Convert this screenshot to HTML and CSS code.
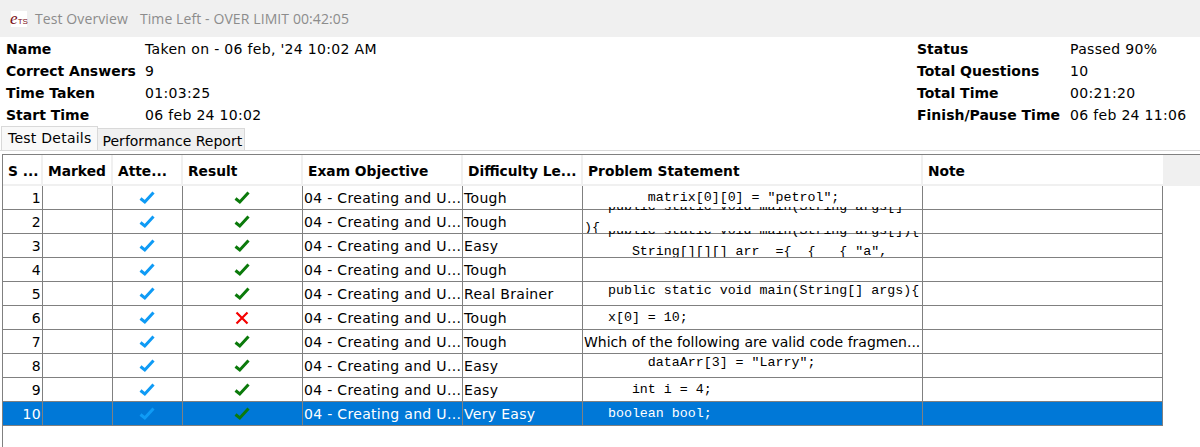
FILE: index.html
```html
<!DOCTYPE html>
<html lang="en">
<head>
  <meta charset="UTF-8">
  <meta name="viewport" content="width=device-width, initial-scale=1.0">
  <title>Test Overview</title>
  <link rel="stylesheet" href="styles.css">
</head>
<body>

<svg class="icon-defs" width="0" height="0">
  <symbol id="check" viewBox="0 0 16 14"><path d="M1.5 7.5 L5.8 11 L14.5 1.5" fill="none" stroke="currentColor" stroke-width="3"/></symbol>
  <symbol id="cross" viewBox="0 0 16 14"><path d="M2.5 1.5 L13.5 12.5 M13.5 1.5 L2.5 12.5" fill="none" stroke="currentColor" stroke-width="2.2"/></symbol>
</svg>

<div class="window">
  <div class="title-bar">
    <span class="app-icon"><span class="app-icon-e">e</span><span class="app-icon-ts">TS</span></span>
    <span class="title-text">Test Overview</span>
    <span class="title-text">Time Left - OVER LIMIT 00:42:05</span>
  </div>

  <!-- Summary of the test -->
  <div class="summary">
    <div class="summary-col">
      <div class="summary-label">Name</div><div>Taken on - 06 feb, '24 10:02 AM</div>
      <div class="summary-label">Correct Answers</div><div>9</div>
      <div class="summary-label">Time Taken</div><div>01:03:25</div>
      <div class="summary-label">Start Time</div><div>06 feb 24 10:02</div>
    </div>
    <div class="summary-col summary-col-right">
      <div class="summary-label">Status</div><div>Passed 90%</div>
      <div class="summary-label">Total Questions</div><div>10</div>
      <div class="summary-label">Total Time</div><div>00:21:20</div>
      <div class="summary-label">Finish/Pause Time</div><div>06 feb 24 11:06</div>
    </div>
  </div>

  <div class="tabs">
    <div class="tab tab-active">Test Details</div>
    <div class="tab">Performance Report</div>
  </div>

  <div class="table-wrap">
    <table class="results">
      <colgroup>
        <col class="col-num"><col class="col-marked"><col class="col-att"><col class="col-result">
        <col class="col-obj"><col class="col-diff"><col class="col-problem"><col class="col-note">
      </colgroup>
      <thead>
        <tr>
          <th>S ...</th><th>Marked</th><th>Atte...</th><th>Result</th>
          <th>Exam Objective</th><th>Difficulty Le...</th><th>Problem Statement</th><th>Note</th>
        </tr>
      </thead>
      <tbody>
        <tr>
          <td class="num">1</td><td></td>
          <td class="icon-cell"><svg class="mark attempted"><use href="#check"/></svg></td>
          <td class="icon-cell"><svg class="mark correct"><use href="#check"/></svg></td>
          <td>04 - Creating and U...</td><td>Tough</td>
          <td><div class="code"><pre>        matrix[0][0] = "petrol";</pre></div></td><td></td>
        </tr>
        <tr>
          <td class="num">2</td><td></td>
          <td class="icon-cell"><svg class="mark attempted"><use href="#check"/></svg></td>
          <td class="icon-cell"><svg class="mark correct"><use href="#check"/></svg></td>
          <td>04 - Creating and U...</td><td>Tough</td>
          <td><div class="code code-multi"><pre>   public static void main(String args[]
){</pre></div></td><td></td>
        </tr>
        <tr>
          <td class="num">3</td><td></td>
          <td class="icon-cell"><svg class="mark attempted"><use href="#check"/></svg></td>
          <td class="icon-cell"><svg class="mark correct"><use href="#check"/></svg></td>
          <td>04 - Creating and U...</td><td>Easy</td>
          <td><div class="code code-multi"><pre>   public static void main(String args[]){
      String[][][] arr  ={  {   { "a",</pre></div></td><td></td>
        </tr>
        <tr>
          <td class="num">4</td><td></td>
          <td class="icon-cell"><svg class="mark attempted"><use href="#check"/></svg></td>
          <td class="icon-cell"><svg class="mark correct"><use href="#check"/></svg></td>
          <td>04 - Creating and U...</td><td>Tough</td>
          <td></td><td></td>
        </tr>
        <tr>
          <td class="num">5</td><td></td>
          <td class="icon-cell"><svg class="mark attempted"><use href="#check"/></svg></td>
          <td class="icon-cell"><svg class="mark correct"><use href="#check"/></svg></td>
          <td>04 - Creating and U...</td><td>Real Brainer</td>
          <td><div class="code code-high"><pre>   public static void main(String[] args){</pre></div></td><td></td>
        </tr>
        <tr>
          <td class="num">6</td><td></td>
          <td class="icon-cell"><svg class="mark attempted"><use href="#check"/></svg></td>
          <td class="icon-cell"><svg class="mark wrong"><use href="#cross"/></svg></td>
          <td>04 - Creating and U...</td><td>Tough</td>
          <td><div class="code"><pre>   x[0] = 10;</pre></div></td><td></td>
        </tr>
        <tr>
          <td class="num">7</td><td></td>
          <td class="icon-cell"><svg class="mark attempted"><use href="#check"/></svg></td>
          <td class="icon-cell"><svg class="mark correct"><use href="#check"/></svg></td>
          <td>04 - Creating and U...</td><td>Tough</td>
          <td class="plain">Which of the following are valid code fragmen...</td><td></td>
        </tr>
        <tr>
          <td class="num">8</td><td></td>
          <td class="icon-cell"><svg class="mark attempted"><use href="#check"/></svg></td>
          <td class="icon-cell"><svg class="mark correct"><use href="#check"/></svg></td>
          <td>04 - Creating and U...</td><td>Easy</td>
          <td><div class="code code-high"><pre>        dataArr[3] = "Larry";</pre></div></td><td></td>
        </tr>
        <tr>
          <td class="num">9</td><td></td>
          <td class="icon-cell"><svg class="mark attempted"><use href="#check"/></svg></td>
          <td class="icon-cell"><svg class="mark correct"><use href="#check"/></svg></td>
          <td>04 - Creating and U...</td><td>Easy</td>
          <td><div class="code"><pre>      int i = 4;</pre></div></td><td></td>
        </tr>
        <tr class="selected">
          <td class="num">10</td><td></td>
          <td class="icon-cell"><svg class="mark attempted"><use href="#check"/></svg></td>
          <td class="icon-cell"><svg class="mark correct"><use href="#check"/></svg></td>
          <td>04 - Creating and U...</td><td>Very Easy</td>
          <td><div class="code"><pre>   boolean bool;</pre></div></td><td></td>
        </tr>
      </tbody>
    </table>
  </div>
</div>

</body>
</html>
```

FILE: styles.css
```css
/* Basic CSS styling */
html, body {
  height: 100%;
}
body {
  font-family: 'DejaVu Sans', sans-serif;
  font-size: 14px;
  letter-spacing: 0.32px;
  margin: 0;
  padding: 0;
  background-color: #fff;
  color: #000;
  overflow: hidden;
}
.icon-defs {
  display: block;
  height: 0;
}
.window {
  display: flex;
  flex-direction: column;
  height: 100%;
}

/* Title bar */
.title-bar {
  display: flex;
  align-items: center;
  height: 37px;
  padding-left: 11px;
  background-color: #f0f0f0;
  font-family: 'Open Sans', sans-serif;
  font-size: 14px;
  letter-spacing: 0.1px;
  color: #8c8c8c;
}
.app-icon {
  display: flex;
  align-items: baseline;
  justify-content: center;
  width: 16px;
  height: 16px;
  margin-right: 8px;
  background-color: #fff;
  color: #7a0c14;
  font-family: 'Liberation Serif', serif;
  letter-spacing: 0;
  line-height: 15px;
}
.app-icon-e {
  font-size: 17px;
  font-style: italic;
}
.app-icon-ts {
  font-family: 'Liberation Sans', sans-serif;
  font-size: 8px;
}
.title-text {
  margin-right: 12px;
}

/* Summary */
.summary {
  display: flex;
  justify-content: space-between;
  height: 87px;
  padding: 1px 0 0 6px;
}
.summary-col {
  display: grid;
  grid-template-columns: 139px auto;
  grid-auto-rows: 22px;
  align-items: center;
  width: 400px;
}
.summary-col-right {
  grid-template-columns: 153px auto;
  width: 283px;
}
.summary-label {
  font-weight: bold;
  letter-spacing: 0;
}

/* Tabs */
.tabs {
  display: flex;
  align-items: flex-end;
  height: 25px;
  padding-left: 1px;
  border-bottom: 1px solid #d9d9d9;
}
.tab {
  height: 21px;
  line-height: 24px;
  padding: 0 2px 0 5px;
  background-color: #f0f0f0;
  border-top: 1px solid #d9d9d9;
  border-right: 1px solid #d9d9d9;
  letter-spacing: 0;
  white-space: nowrap;
}
.tab-active {
  height: 23px;
  line-height: 22px;
  padding: 0 5px 0 6px;
  background-color: #f9f9f9;
  border-left: 1px solid #d9d9d9;
  letter-spacing: 0.25px;
}

/* Results table */
.table-wrap {
  flex: 1;
  margin: 3px 0 0 2px;
  border-top: 1px solid #808080;
  border-left: 1px solid #808080;
  background: linear-gradient(#f0f0f0, #f0f0f0) no-repeat top / 100% 31px;
  min-height: 0;
}
.results {
  border-collapse: separate;
  border-spacing: 0;
  table-layout: fixed;
  width: 1160px;
  background-color: #fff;
}
.col-num { width: 40px; }
.col-marked { width: 70px; }
.col-att { width: 70px; }
.col-result { width: 120px; }
.col-obj { width: 160px; }
.col-diff { width: 120px; }
.col-problem { width: 340px; }
.col-note { width: 240px; }
.results th {
  height: 27px;
  padding: 2px 0 0 5px;
  text-align: left;
  font-size: 13.8px;
  font-weight: bold;
  letter-spacing: 0;
  white-space: nowrap;
  overflow: hidden;
  border-right: 2px solid #f0f0f0;
  border-bottom: 2px solid #f0f0f0;
}
.results th:last-child {
  border-right: none;
}
.results td {
  height: 23px;
  padding: 0 0 0 1px;
  border-right: 1px solid #808080;
  border-bottom: 1px solid #808080;
  white-space: nowrap;
  text-align: left;
}
.results td.num {
  padding: 0 1px 0 0;
  text-align: right;
}
.results td.icon-cell {
  padding: 0 1px 0 0;
}
.results td.plain {
  letter-spacing: 0;
}
.mark {
  display: block;
  width: 16px;
  height: 14px;
  margin: 0 auto;
}
.attempted { color: #0f9bf5; }
.correct { color: #0b7a0b; }
.wrong { color: #f50000; }
.code {
  display: flex;
  align-items: center;
  height: 23px;
  overflow: hidden;
}
.code pre {
  margin: 0;
  font-family: 'Liberation Mono', monospace;
  font-size: 13.3px;
  letter-spacing: 0;
  line-height: 20px;
}
/* two line statements poke out above their row and get clipped */
.code-multi {
  align-items: flex-start;
  height: 26px;
  margin-top: -3px;
}
.code-multi pre {
  margin-top: -11px;
  line-height: 21px;
}
.code-high pre {
  margin-bottom: 5px;
}
.selected td {
  background-color: #0078d7;
  color: #fff;
}
```
